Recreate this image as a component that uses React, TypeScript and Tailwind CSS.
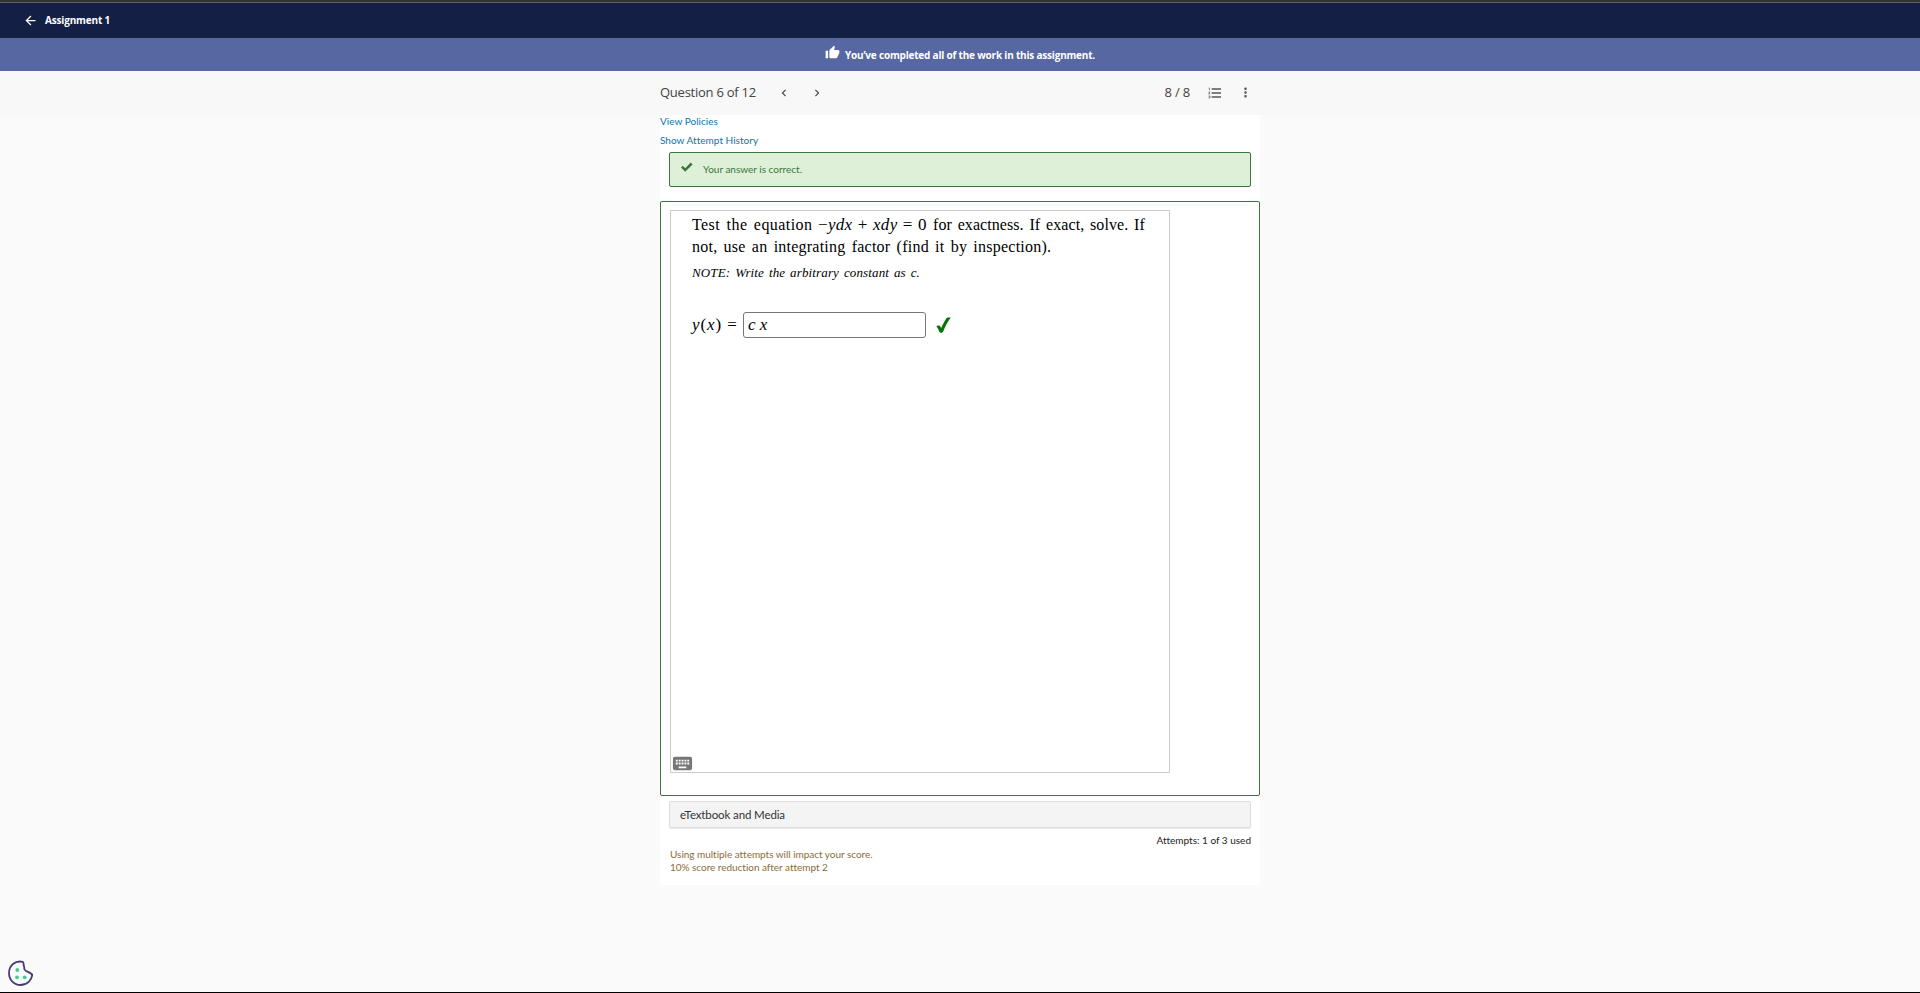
import { MdArrowBack, MdThumbUp, MdChevronLeft, MdChevronRight, MdFormatListNumbered, MdMoreVert, MdKeyboard } from "react-icons/md";

function TopBar() {
  return (
    <>
      <div className="h-[2px] bg-[#333333]" />
      <div className="h-px bg-[#625f62]" />
      <header className="flex h-[35px] items-center bg-[#141f45] pl-[23px] text-white">
        <MdArrowBack size={15} />
        <h1 className="pb-px pl-[7px] text-[10px] leading-[14px] font-bold tracking-[-0.17px]">Assignment 1</h1>
      </header>
      <div className="flex h-[33px] items-center justify-center bg-[#5767a1] text-white">
        <MdThumbUp size={15} className="mb-[5px]" />
        <p className="pl-[5px] text-[10px] leading-[14px] font-bold tracking-[-0.2px]">You’ve completed all of the work in this assignment.</p>
      </div>
    </>
  );
}

function QuestionNav() {
  return (
    <nav className="h-[44px] bg-[#f8f8f8] text-[#424242]">
      <div className="mx-auto flex h-full w-[600px] items-center pb-px">
        <span className="w-[96px] pb-px text-[13px] leading-[18px] tracking-[-0.25px] whitespace-nowrap">Question 6 of 12</span>
        <MdChevronLeft size={14} className="ml-[21px] text-[#444]" />
        <MdChevronRight size={14} className="ml-[19px] text-[#444]" />
        <span className="ml-auto pb-px text-[13px] leading-[18px] tracking-[-0.2px]">8 / 8</span>
        <MdFormatListNumbered size={16} className="ml-[17px] text-[#555]" />
        <MdMoreVert size={15} className="mr-[7px] ml-[15px] text-[#555]" />
      </div>
    </nav>
  );
}

function Problem() {
  return (
    <section className="mt-[14px] h-[595px] rounded-[2px] border border-[#3c763d] pt-2 pl-[9px]">
      <div className="flex h-[563px] w-[500px] flex-col border border-[#cccccc] pl-[21px] font-['Liberation_Serif',serif] text-black">
        <p className="mt-[3px] text-[16px] leading-[22px] whitespace-nowrap">
          <span className="inline-block w-[126px] tracking-[0.43px] [word-spacing:2px]">Test the equation</span>
          <span className="inline-block w-[115px] text-[17px] tracking-[0.3px] [word-spacing:0.8px]">
            −<i>ydx</i> + <i>xdy</i> = 0
          </span>
          <span className="tracking-[0.06px] [word-spacing:1.8px]">for exactness. If exact, solve. If</span>
        </p>
        <p className="text-[16px] leading-[22px] tracking-[0.23px] [word-spacing:2px] whitespace-nowrap">
          not, use an integrating factor (find it by inspection).
        </p>
        <p className="mt-[6px] text-[13px] leading-[18px] italic tracking-[0.14px] [word-spacing:1.5px] whitespace-nowrap">
          NOTE: Write the arbitrary constant as c.
        </p>
        <div className="mt-[30px] flex h-[26px] items-center">
          <span className="w-[51px] text-[17px] leading-5 tracking-[0.9px] whitespace-nowrap">
            <i>y</i>(<i>x</i>) =
          </span>
          <div className="flex h-[26px] w-[183px] items-center rounded-[3px] border border-[#767676] pl-1 text-[17px] leading-5 italic">
            c x
          </div>
          <svg viewBox="0 0 15 17" className="ml-[10px] h-[17px] w-[15px] fill-[#067506]">
            <path d="M0.3 9.6C1.5 8.2 3.8 8.2 4.8 10.2L5.2 11C7.2 6.4 9.3 2.7 10.6 0.9C11.6 0.4 13.5 0.4 14.8 0.6C12 4.2 9.4 9.2 7.2 14.5C6.2 16.3 4.1 16.3 3.3 14.8C2.5 12.6 1.8 10.6 0.3 9.6Z" />
          </svg>
        </div>
        <MdKeyboard size={23} className="mt-auto -mb-[3px] -ml-[21px] text-[#777777]" />
      </div>
    </section>
  );
}

export default function App() {
  return (
    <div className="flex h-[993px] flex-col overflow-hidden border-b border-black bg-[#fafafa] font-['Open_Sans',sans-serif]">
      <TopBar />
      <QuestionNav />
      <main className="mx-auto h-[770px] w-[600px] shrink-0 bg-white font-['Lato',sans-serif] text-[10px] [font-variant-ligatures:none]">
        <a className="block leading-[13px] tracking-[0.03px] text-[#0875b1]">View Policies</a>
        <a className="mt-[5px] block leading-[14px] tracking-[0.03px] text-[#0875b1]">Show Attempt History</a>
        <div className="mx-[9px] mt-[5px] flex h-[35px] items-center rounded-[2px] border border-[#3c763d] bg-[#dff0d8] text-[#3c763d]">
          <svg viewBox="0 0 12 10" className="mb-[5px] ml-[11px] h-[10px] w-[12px] fill-[#3c763d]">
            <path d="M1.7 3.8L4.2 6.2L9.7 0.6L11.6 2.5L4.2 9.7L0 5.6Z" />
          </svg>
          <span className="ml-[10px]">Your answer is correct.</span>
        </div>
        <Problem />
        <div className="mx-[9px] mt-[5px] flex h-[27px] items-center rounded-[2px] border border-[#dddddd] bg-[#f4f4f4] pl-[10px] text-[11.5px] tracking-[-0.12px] text-[#333] shadow-[0_1px_1px_rgba(0,0,0,0.08)]">
          eTextbook and Media
        </div>
        <p className="mt-[6px] mr-[9px] text-right leading-[13px] text-[#222]">Attempts: 1 of 3 used</p>
        <p className="mt-[1px] ml-[10px] leading-[13px] tracking-[-0.03px] text-[#8a6d3b]">
          Using multiple attempts will impact your score.
          <br />
          10% score reduction after attempt 2
        </p>
      </main>
      <footer className="mt-auto pb-[6px] pl-2">
        <svg viewBox="0 0 25 26" className="h-[26px] w-[25px]" fill="none">
          <path d="M14.8 1.8C7 .2 1 5.5 1 13C1 20 6 25 12.5 25C19 25 24 20 24.2 14.5C22.5 12.8 20.5 11.8 17.8 10.8C16.5 10.2 16 9 16.3 7.2C15.2 5.8 16.3 4 14.8 1.8Z" stroke="#463c7a" strokeWidth="1.8" strokeLinejoin="round" />
          <circle cx="9.3" cy="10" r="1.9" fill="#40d08d" />
          <circle cx="9" cy="17.3" r="1.9" fill="#40d08d" />
          <circle cx="16.7" cy="17.3" r="1.9" fill="#40d08d" />
        </svg>
      </footer>
    </div>
  );
}
